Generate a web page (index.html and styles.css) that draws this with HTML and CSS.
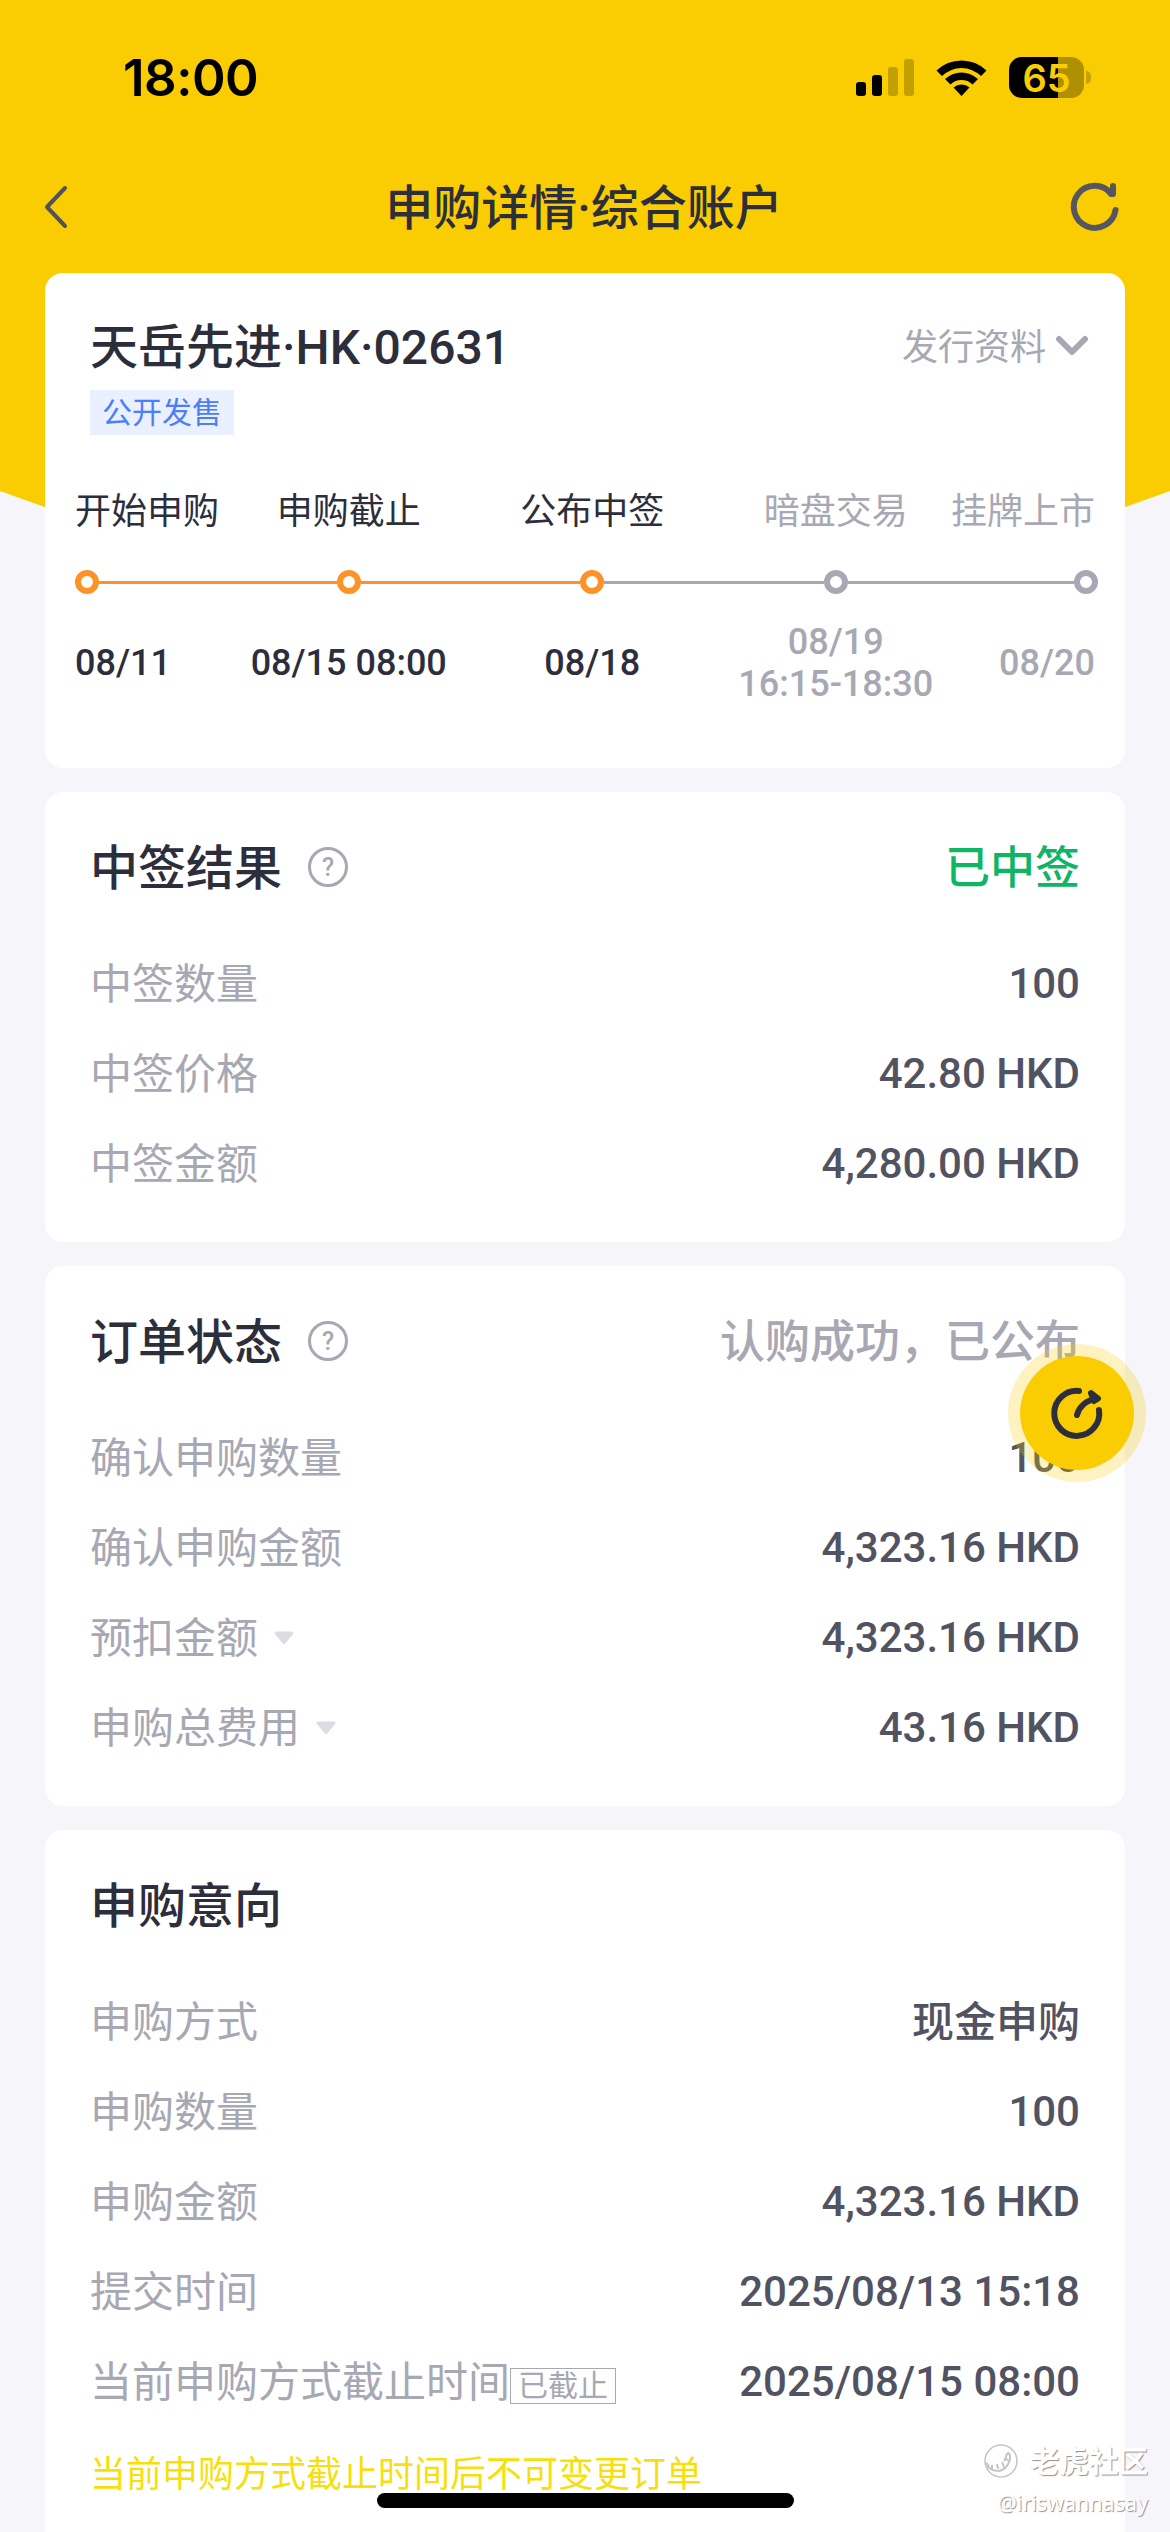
FILE: index.html
```html
<!DOCTYPE html>
<html lang="zh-CN">
<head>
  <meta charset="UTF-8">
  <meta name="viewport" content="width=device-width, initial-scale=1.0">
  <title>申购详情</title>
  <link rel="stylesheet" href="styles.css">
</head>
<body>

  <div class="page">
    <div class="banner"></div>

    <div class="status-bar">
      <span class="time">18:00</span>
      <div class="status-icons">
        <svg width="40" height="38" viewBox="0 0 40 38">
          <rect x="0" y="23" width="10" height="14" rx="3"/>
          <rect x="16" y="16" width="10" height="21" rx="3"/>
          <rect x="32" y="8" width="10" height="29" rx="3" opacity="0.22"/>
          <rect x="48" y="0" width="10" height="37" rx="3" opacity="0.22"/>
        </svg>
        <svg class="wifi" width="52" height="38" viewBox="0 0 52 38">
          <path d="M0.5 11.5 A36 36 0 0 1 50.5 11.5 L45 17 A28 28 0 0 0 6 17 Z"/>
          <path d="M9 20 A24 24 0 0 1 42 20 L36.500 25.500 A16 16 0 0 0 14.500 25.500 Z"/>
          <path d="M17.500 28.500 A12 12 0 0 1 33.500 28.500 L25.500 37 Z"/>
        </svg>
        <div class="battery">65</div>
        <span class="battery-tip"></span>
      </div>
    </div>

    <header class="nav">
      <svg width="52" height="48" viewBox="0 0 52 48">
        <path d="M24 5 L6 24 L24 43" fill="none" stroke="#51525c" stroke-width="4" stroke-linecap="round" stroke-linejoin="round"/>
      </svg>
      <h1>申购详情·综合账户</h1>
      <svg width="52" height="52" viewBox="0 0 52 52">
        <path d="M46.500 29 A21 21 0 1 1 42 12.500 M44 5 V13 H42" fill="none" stroke="#565660" stroke-width="6" stroke-linecap="round" stroke-linejoin="round"/>
      </svg>
    </header>

    <main>
      <section class="card summary">
        <div class="stock">
          <h2>天岳先进·HK·02631</h2>
          <div class="docs">
            <span>发行资料</span>
            <svg width="34" height="24" viewBox="0 0 34 24">
              <path d="M4 5 L17 18 L30 5" fill="none" stroke="#a7a8b3" stroke-width="6" stroke-linecap="round" stroke-linejoin="round"/>
            </svg>
          </div>
        </div>
        <span class="tag">公开发售</span>

        <div class="steps names">
          <span>开始申购</span>
          <span>申购截止</span>
          <span>公布中签</span>
          <span class="todo">暗盘交易</span>
          <span class="todo">挂牌上市</span>
        </div>
        <div class="track">
          <i class="dot"></i><i class="line first"></i>
          <i class="dot"></i><i class="line"></i>
          <i class="dot"></i><i class="line todo"></i>
          <i class="dot todo"></i><i class="line todo last"></i>
          <i class="dot todo"></i>
        </div>
        <div class="steps dates">
          <span>08/11</span>
          <span>08/15 08:00</span>
          <span>08/18</span>
          <span class="todo">08/19<br>16:15-18:30</span>
          <span class="todo">08/20</span>
        </div>
      </section>

      <section class="card">
        <div class="card-head">
          <h2>中签结果</h2>
          <span class="help">?</span>
          <span class="state success">已中签</span>
        </div>
        <div class="row"><span class="label">中签数量</span><span class="value">100</span></div>
        <div class="row"><span class="label">中签价格</span><span class="value">42.80 HKD</span></div>
        <div class="row"><span class="label">中签金额</span><span class="value">4,280.00 HKD</span></div>
      </section>

      <section class="card">
        <div class="card-head">
          <h2>订单状态</h2>
          <span class="help">?</span>
          <span class="state">认购成功，已公布</span>
        </div>
        <div class="row"><span class="label">确认申购数量</span><span class="value">100</span></div>
        <div class="row"><span class="label">确认申购金额</span><span class="value">4,323.16 HKD</span></div>
        <div class="row">
          <span class="label">预扣金额</span>
          <svg class="caret" width="20" height="14" viewBox="0 0 20 14"><path d="M2 2 H18 L10 11.500 Z"/></svg>
          <span class="value">4,323.16 HKD</span>
        </div>
        <div class="row">
          <span class="label">申购总费用</span>
          <svg class="caret" width="20" height="14" viewBox="0 0 20 14"><path d="M2 2 H18 L10 11.500 Z"/></svg>
          <span class="value">43.16 HKD</span>
        </div>
      </section>

      <section class="card last-card">
        <div class="card-head">
          <h2>申购意向</h2>
        </div>
        <div class="row"><span class="label">申购方式</span><span class="value text">现金申购</span></div>
        <div class="row"><span class="label">申购数量</span><span class="value">100</span></div>
        <div class="row"><span class="label">申购金额</span><span class="value">4,323.16 HKD</span></div>
        <div class="row"><span class="label">提交时间</span><span class="value">2025/08/13 15:18</span></div>
        <div class="row">
          <span class="label">当前申购方式截止时间</span>
          <span class="closed">已截止</span>
          <span class="value">2025/08/15 08:00</span>
        </div>
        <p class="notice">当前申购方式截止时间后不可变更订单</p>
      </section>
    </main>

    <button class="fab" type="button">
      <svg width="60" height="60" viewBox="0 0 60 60" fill="none" stroke="#2d2e3b" stroke-width="6" stroke-linecap="round" stroke-linejoin="round">
        <path d="M32 8 A22.500 22.500 0 1 0 52 27"/>
        <path d="M30 32 C32 24 39 17 49 16"/>
        <path d="M44 10 L51 15.500 L47 18 Z" fill="#2d2e3b"/>
      </svg>
    </button>

    <div class="watermark">
      <div class="brand">
        <svg width="36" height="36" viewBox="0 0 36 36" fill="none" stroke="#c3c4c9">
          <circle cx="18" cy="18" r="16" stroke-width="1.500"/>
          <path d="M26 10 C29 16 25 24 19 27 C14 29 8 27 4 23 M26 10 C22 10 24 15 21 18" stroke-width="2"/>
          <path d="M3 20 L6 23 M9 22 V26 M14 21 L15 26 M19 19 L21 24 M22 15 L26 18" stroke-width="2"/>
        </svg>
        <span>老虎社区</span>
      </div>
      <div class="user">@iriswannasay</div>
    </div>

    <div class="home-bar"></div>
  </div>

</body>
</html>
```
FILE: styles.css
```css
body {
  margin: 0;
  background-color: #f5f5fa;
  font-family: Roboto, "Noto Sans CJK SC", sans-serif;
  color: #2d2e3b;
}
h1, h2, p {
  margin: 0;
}
svg {
  display: block;
  flex-shrink: 0;
  overflow: visible;
}
.page {
  position: relative;
  width: 1170px;
  height: 2532px;
  overflow: hidden;
}
.banner {
  position: absolute;
  top: 0;
  left: 0;
  width: 100%;
  height: 700px;
  background-color: #f9cd02;
  clip-path: polygon(0 0, 100% 0, 100% 491px, 50% 700px, 0 491px);
}
.status-bar, .nav, main {
  position: relative;
}

/* status bar */
.status-bar {
  display: flex;
  justify-content: space-between;
  align-items: center;
  box-sizing: border-box;
  height: 150px;
  padding: 5px 79px 0 123px;
  color: #000;
  font-family: Inter, sans-serif;
}
.time {
  font-size: 51px;
  font-weight: 600;
  letter-spacing: -0.5px;
}
.status-icons {
  display: flex;
  align-items: center;
}
.wifi {
  margin-left: 40px;
}
.battery {
  width: 75px;
  height: 41px;
  margin-left: 21px;
  border-radius: 13px;
  background: linear-gradient(to right, #000 49px, #ae9002 49px);
  color: #f9cd02;
  font-size: 38px;
  font-weight: 600;
  line-height: 42px;
  text-align: center;
}
.battery-tip {
  width: 5px;
  height: 13px;
  margin-left: 2px;
  border-radius: 0 6px 6px 0;
  background-color: #c5a302;
}

/* nav */
.nav {
  display: flex;
  justify-content: space-between;
  align-items: center;
  height: 114px;
  padding: 0 49px 0 41px;
}
.nav h1 {
  padding: 0 0 6px 6px;
  font-size: 48px;
  font-weight: 500;
}

/* cards */
main {
  display: flex;
  flex-direction: column;
  gap: 24px;
  padding: 9px 45px 0;
}
.card {
  box-sizing: border-box;
  padding: 30px 45px 34px;
  border-radius: 18px;
  background-color: #fff;
}
.card h2 {
  padding-bottom: 6px;
  font-size: 48px;
  font-weight: 500;
}
.last-card {
  height: 720px;
}

/* summary */
.summary {
  height: 495px;
  padding: 38px 27px 0 30px;
}
.stock {
  display: flex;
  justify-content: space-between;
  align-items: center;
  height: 70px;
  padding: 0 9px 0 15px;
}
.docs {
  display: flex;
  align-items: center;
  gap: 9px;
  color: #a7a8b3;
  font-size: 36px;
}
.docs span {
  padding-bottom: 5px;
}
.tag {
  display: block;
  width: 120px;
  height: 45px;
  margin: 9px 0 0 15px;
  padding: 0 12px;
  background-color: #eaf0ff;
  color: #4a7efa;
  font-size: 30px;
  line-height: 45px;
}
.steps {
  display: grid;
  grid-template-columns: 152px 243.5px 243.5px 243.5px 137.5px;
  align-items: center;
  justify-items: center;
  font-size: 36px;
  text-align: center;
  white-space: nowrap;
}
.steps span:first-child {
  justify-self: start;
}
.steps span:last-child {
  justify-self: end;
}
.names {
  height: 60px;
  margin-top: 43px;
}
.dates {
  height: 90px;
  margin-top: 24px;
  font-weight: 500;
  line-height: 42px;
}
.steps .todo {
  color: #a7a8b3;
}
.track {
  display: flex;
  align-items: center;
  margin-top: 32px;
}
.dot {
  box-sizing: border-box;
  width: 24px;
  height: 24px;
  border: 6px solid #fd9226;
  border-radius: 50%;
}
.line {
  flex: 220;
  height: 3px;
  background-color: #fd9226;
}
.line.first {
  flex: 238;
}
.line.last {
  flex: 226;
}
.dot.todo {
  border-color: #a7a8b3;
}
.line.todo {
  background-color: #a7a8b3;
}

/* rows */
.card-head {
  display: flex;
  align-items: center;
  height: 90px;
  margin-bottom: 26px;
}
.help {
  box-sizing: border-box;
  width: 40px;
  height: 40px;
  margin-left: 26px;
  border: 3px solid #a7a8b3;
  border-radius: 50%;
  color: #a7a8b3;
  font-size: 25px;
  font-weight: 500;
  line-height: 35px;
  text-align: center;
}
.state {
  margin-left: auto;
  padding-bottom: 6px;
  color: #a7a8b3;
  font-size: 45px;
  font-weight: 500;
}
.success {
  color: #0fb564;
}
.row {
  display: flex;
  align-items: center;
  height: 90px;
  font-size: 42px;
}
.label {
  padding-bottom: 6px;
  color: #a7a8b3;
}
.value {
  margin-left: auto;
  color: #525362;
  font-weight: 500;
}
.value.text {
  padding-bottom: 6px;
}
.caret {
  margin: 2px 0 0 16px;
  fill: #dcdde2;
  stroke: #dcdde2;
  stroke-width: 3;
  stroke-linejoin: round;
}
.closed {
  box-sizing: border-box;
  height: 36px;
  margin-top: 10px;
  padding: 0 7px;
  border: 1px solid #a7a8b3;
  color: #a7a8b3;
  font-size: 30px;
  line-height: 34px;
}
.notice {
  height: 90px;
  margin-top: 4px;
  color: #f8df0c;
  font-size: 36px;
  line-height: 90px;
}

/* things floating over the page */
.fab {
  position: absolute;
  top: 1344px;
  left: 1008px;
  display: flex;
  justify-content: center;
  align-items: center;
  width: 138px;
  height: 138px;
  padding: 0;
  border: 12px solid rgba(249, 205, 2, 0.25);
  border-radius: 50%;
  background-color: #f9cd02;
  background-clip: padding-box;
}
.watermark {
  position: absolute;
  right: 22px;
  bottom: 13px;
  display: flex;
  flex-direction: column;
  align-items: flex-end;
  color: #fff;
  text-shadow: 1px 1px 1px #8f9096;
}
.brand {
  display: flex;
  align-items: center;
  gap: 11px;
  height: 44px;
  font-size: 29.5px;
  font-weight: 700;
}
.brand span {
  padding-bottom: 4px;
}
.user {
  font-family: "Noto Sans", sans-serif;
  font-size: 21.500px;
  line-height: 32px;
  margin-top: 4px;
}
.home-bar {
  position: absolute;
  left: 377px;
  bottom: 24px;
  width: 417px;
  height: 15px;
  border-radius: 8px;
  background-color: #000;
}
```
